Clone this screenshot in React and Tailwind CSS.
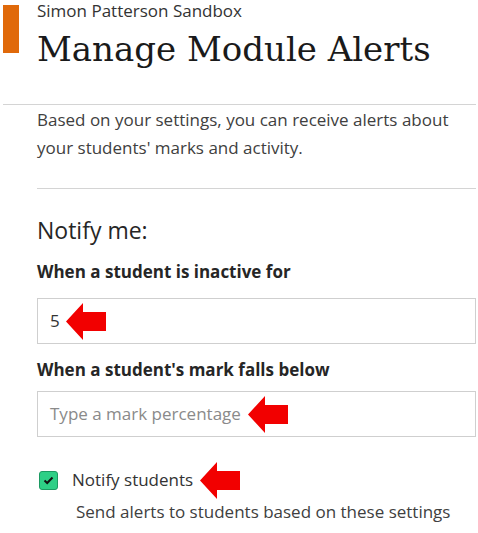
import React from "react";

function Arrow({ className = "" }) {
  return (
    <svg width="40" height="37" viewBox="0 0 40 37" className={"shrink-0 " + className}>
      <polygon points="0,18.5 17,0 17,9 40,9 40,28 17,28 17,37" fill="#f20000" />
    </svg>
  );
}

export default function App() {
  return (
    <div className="w-[478px] h-[533px] bg-white overflow-hidden text-[#262626]" style={{ fontFamily: '"Open Sans", sans-serif' }}>
      <div className="flex">
        <div className="ml-[3px] mt-[5px] w-[16px] h-[48px] bg-[#e0690a]" />
        <div className="ml-[18px] mt-[1px]">
          <div className="text-[17px] leading-[20px] text-[#333]">Simon Patterson Sandbox</div>
          <h1 className="mt-[7px] text-[34px] leading-[42px] text-[#1a1a1a]" style={{ fontFamily: '"DejaVu Serif", serif' }}>
            Manage Module Alerts
          </h1>
        </div>
      </div>
      <div className="ml-[3px] mr-[2px] mt-[34px] h-[1px] bg-[#d4d4d4]" />
      <div className="ml-[37px] mr-[2px]">
        <p className="mt-[1px] text-[17px] leading-[28px] text-[#404040]">
          Based on your settings, you can receive alerts about your students' marks and activity.
        </p>
        <div className="mt-[26px] h-[1px] bg-[#d4d4d4]" />
        <div className="mt-[26px] text-[23px] leading-[30px] text-[#262626]">Notify me:</div>
        <div className="mt-[15px] text-[17px] leading-[24px] font-bold text-[#262626]">When a student is inactive for</div>
        <div className="mt-[14px] h-[46px] border border-[#cfcfcf] flex items-center pl-[12px] gap-[6px]">
          <span className="text-[17px] text-[#333]">5</span>
          <Arrow />
        </div>
        <div className="mt-[14px] text-[17px] leading-[24px] font-bold text-[#262626]">When a student's mark falls below</div>
        <div className="mt-[9px] h-[46px] border border-[#cfcfcf] flex items-center pl-[12px] gap-[7px]">
          <span className="text-[17px] text-[#8a8a8a]">Type a mark percentage</span>
          <Arrow />
        </div>
        <div className="mt-[31px] h-[24px] flex items-center">
          <div className="ml-[2px] w-[19px] h-[19px] rounded-[3px] bg-[#2ecf86] border border-[#1c9a62] flex items-center justify-center">
            <svg width="11" height="9" viewBox="0 0 11 9">
              <path d="M1.5 4.5 L4.2 7 L9.5 1.5" stroke="#111" strokeWidth="2" fill="none" />
            </svg>
          </div>
          <span className="ml-[14px] text-[17px] leading-[24px] text-[#333]">Notify students</span>
          <Arrow className="ml-[7px]" />
        </div>
        <div className="mt-[8px] ml-[39px] text-[17px] leading-[24px] text-[#404040]">Send alerts to students based on these settings</div>
      </div>
    </div>
  );
}
